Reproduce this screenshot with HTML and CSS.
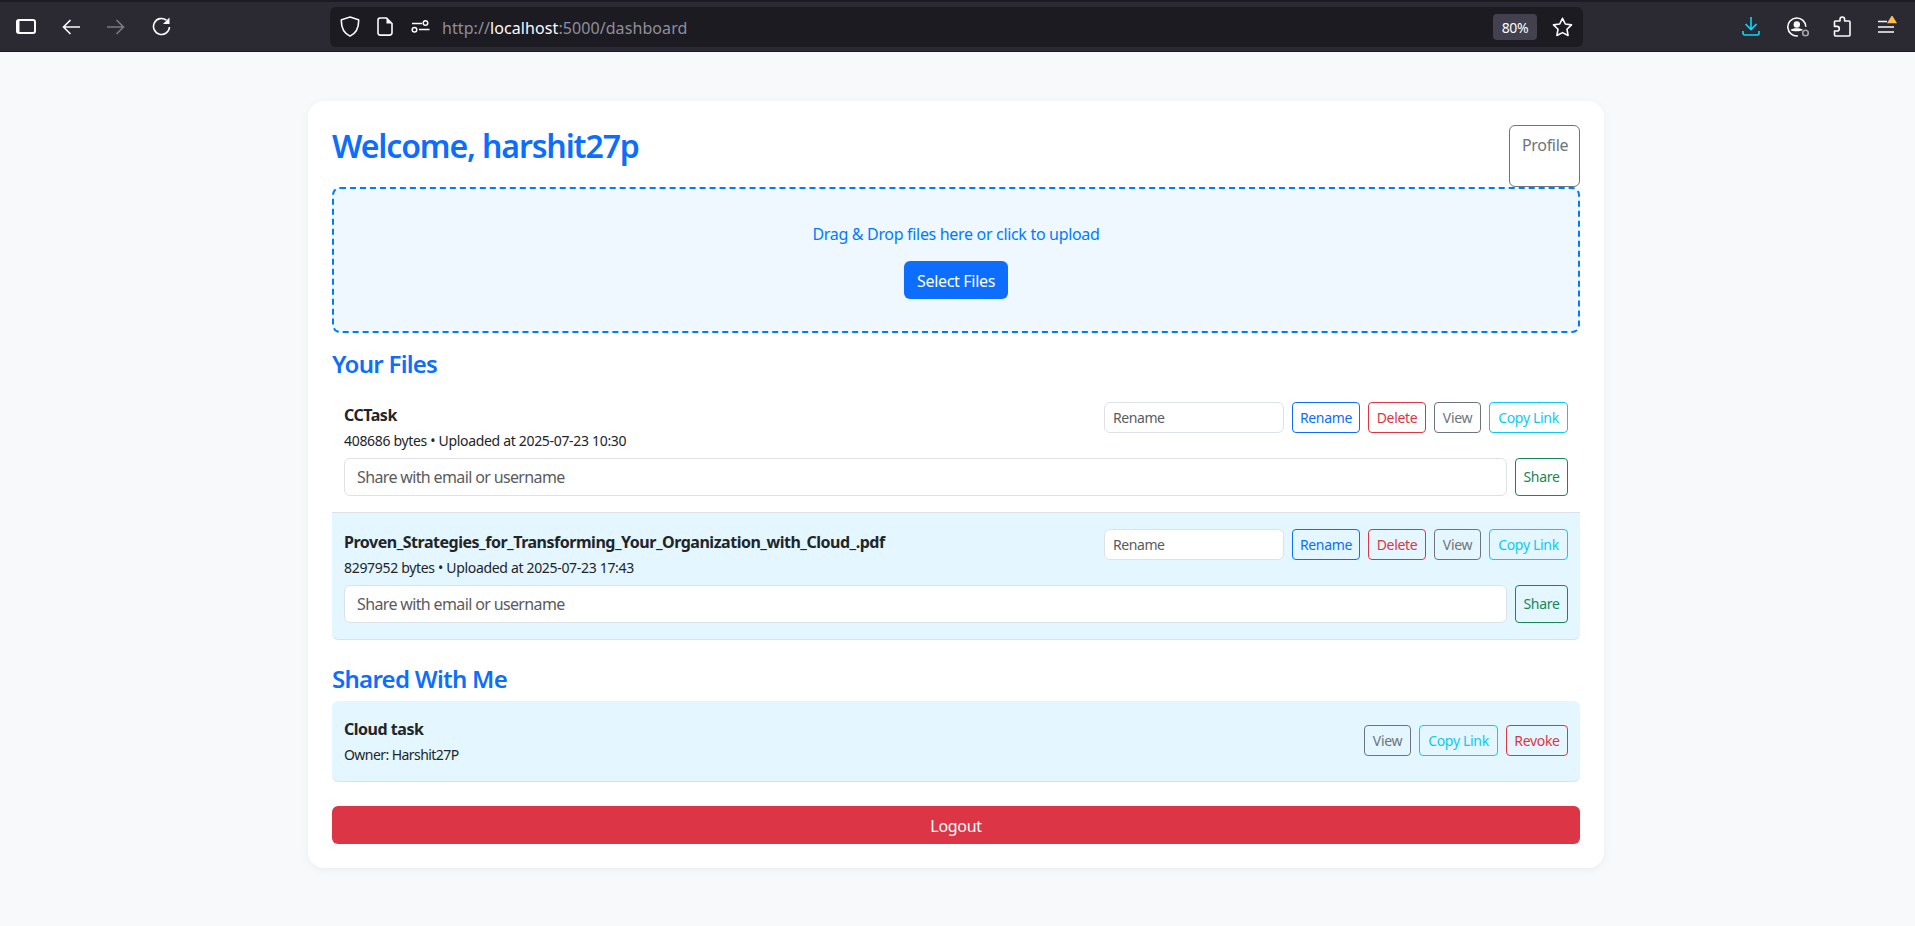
FILE: index.html
```html
<!DOCTYPE html>
<html lang="en">
<head>
    <meta charset="UTF-8">
    <title>Dashboard</title>
    <link rel="stylesheet" href="styles.css">
</head>
<body>

    <header class="toolbar">
        <svg class="icon icon-sidebar" width="20" height="15" viewBox="0 0 20 15" fill="none" stroke="#fbfbfe" stroke-width="2"><rect x="1" y="1" width="18" height="13" rx="2"/><path d="M2 1.500v12" stroke-width="3"/></svg>
        <svg class="icon icon-back" width="18" height="16" viewBox="0 0 18 16" fill="none" stroke="#fbfbfe" stroke-width="1.6"><path d="M18 8H1.500M8.500 1l-7 7 7 7"/></svg>
        <svg class="icon icon-forward" width="18" height="16" viewBox="0 0 18 16" fill="none" stroke="#7b7a82" stroke-width="1.6"><path d="M0 8h16.500M9.500 1l7 7-7 7"/></svg>
        <svg class="icon icon-reload" width="19" height="19" viewBox="0 0 19 19" fill="none" stroke="#fbfbfe" stroke-width="1.6"><path d="M14.500 3.200A8 8 0 1 0 17.500 10"/><path d="M11 7h6.500V.5z" fill="#fbfbfe" stroke="none"/></svg>

        <div class="urlbar">
            <svg class="icon icon-shield" width="20" height="21" viewBox="0 0 20 21" fill="none" stroke="#fbfbfe" stroke-width="1.6"><path d="M10 1 18.600 3.800c.4 8-1.700 13-8.600 16.300C3.100 16.800 1 11.800 1.400 3.800z"/></svg>
            <svg class="icon icon-page" width="16" height="19" viewBox="0 0 16 19" fill="none" stroke="#fbfbfe" stroke-width="1.6"><path d="M3 1h6.500L15 6.500v9.300a2.300 2.300 0 0 1-2.300 2.300H3.300A2.300 2.300 0 0 1 1 15.800V3.200A2.200 2.200 0 0 1 3 1z"/><path d="M9.500 1.500v5h5z" fill="#fbfbfe" stroke="none"/></svg>
            <svg class="icon icon-perm" width="19" height="13" viewBox="0 0 19 13" fill="none" stroke="#fbfbfe" stroke-width="1.5"><circle cx="14.500" cy="3" r="2.300"/><path d="M1 3.500h10"/><circle cx="3.500" cy="9.800" r="2.300"/><path d="M8 9.500h10.500"/></svg>
            <span class="url">http://<b>localhost</b>:5000/dashboard</span>
            <span class="zoom-chip">80%</span>
            <svg class="icon icon-star" width="21" height="20" viewBox="0 0 21 20" fill="none" stroke="#fbfbfe" stroke-width="1.6" stroke-linejoin="round"><path d="M10.500 1.300 13.300 7l6.200.9-4.500 4.400 1.100 6.200-5.600-2.900-5.600 2.900 1.100-6.200L1.500 7.900 7.700 7z"/></svg>
        </div>

        <svg class="icon icon-download" width="18" height="19" viewBox="0 0 18 19" fill="none" stroke="#00ddff" stroke-width="1.6"><path d="M9 0v12.500M3.500 7 9 12.500 14.500 7M1 14v2a2 2 0 0 0 2 2h12a2 2 0 0 0 2-2v-2"/></svg>
        <svg class="icon icon-account" width="24" height="20" viewBox="0 0 24 20" fill="none" stroke="#fbfbfe" stroke-width="1.6"><path d="M19.800 9.800a9 9 0 1 0-8 9.100"/><circle cx="10.800" cy="7.500" r="3.200" fill="#fbfbfe" stroke="none"/><path d="M4.500 13c2-2.500 11-2.500 12.500 0-2 1-9 2.500-12.500 0z" fill="#fbfbfe" stroke="none"/><circle cx="19.500" cy="16" r="2.800" stroke="#a5a4ab"/></svg>
        <svg class="icon icon-ext" width="18" height="21" viewBox="0 0 18 21" fill="none" stroke="#fbfbfe" stroke-width="1.6" stroke-linejoin="round"><path d="M7 5V3.300a2.300 2.300 0 0 1 4.600 0V5H16a1 1 0 0 1 1 1v13a1 1 0 0 1-1 1H2.500a1 1 0 0 1-1-1v-4H4a2.300 2.300 0 0 0 0-4.600H1.500V6a1 1 0 0 1 1-1H7z"/></svg>
        <svg class="icon icon-menu" width="20" height="20" viewBox="0 0 20 20" fill="none" stroke="#fbfbfe" stroke-width="1.6"><path d="M1 6.500h9M1 12h16M1 17h16"/><path d="M10 8.300 14.500 1h1l4.500 7.300z" fill="#ffbd4f" stroke="none"/></svg>
    </header>

    <main class="card">
        <div class="card-head">
            <h1>Welcome, harshit27p</h1>
            <a class="btn btn-profile">Profile</a>
        </div>

        <div class="dropzone">
            <p>Drag &amp; Drop files here or click to upload</p>
            <button class="btn btn-primary">Select Files</button>
        </div>

        <h2>Your Files</h2>
        <div class="file-list">
            <div class="file-row">
                <div class="row-top">
                    <div class="file-info">
                        <strong>CCTask</strong>
                        <small>408686 bytes • Uploaded at 2025-07-23 10:30</small>
                    </div>
                    <div class="file-actions">
                        <input class="input-sm" placeholder="Rename">
                        <button class="btn-sm out-blue w-rename">Rename</button>
                        <button class="btn-sm out-red w-delete">Delete</button>
                        <button class="btn-sm out-grey w-view">View</button>
                        <button class="btn-sm out-cyan w-copy">Copy Link</button>
                    </div>
                </div>
                <div class="share-row">
                    <input class="input-share" placeholder="Share with email or username">
                    <button class="btn-share">Share</button>
                </div>
            </div>
            <div class="file-row tinted">
                <div class="row-top">
                    <div class="file-info">
                        <strong>Proven_Strategies_for_Transforming_Your_Organization_with_Cloud_.pdf</strong>
                        <small>8297952 bytes • Uploaded at 2025-07-23 17:43</small>
                    </div>
                    <div class="file-actions">
                        <input class="input-sm" placeholder="Rename">
                        <button class="btn-sm out-blue w-rename">Rename</button>
                        <button class="btn-sm out-red w-delete">Delete</button>
                        <button class="btn-sm out-grey w-view">View</button>
                        <button class="btn-sm out-cyan w-copy">Copy Link</button>
                    </div>
                </div>
                <div class="share-row">
                    <input class="input-share" placeholder="Share with email or username">
                    <button class="btn-share">Share</button>
                </div>
            </div>
        </div>

        <h2>Shared With Me</h2>
        <div class="file-row tinted shared-row">
            <div class="row-top shared-top">
                <div class="file-info">
                    <strong>Cloud task</strong>
                    <small class="owner">Owner: Harshit27P</small>
                </div>
                <div class="file-actions">
                    <button class="btn-sm out-grey w-view">View</button>
                    <button class="btn-sm out-cyan w-copy">Copy Link</button>
                    <button class="btn-sm out-red w-revoke">Revoke</button>
                </div>
            </div>
        </div>

        <button class="btn btn-logout">Logout</button>
    </main>

</body>
</html>
```

FILE: styles.css
```css
* {
    box-sizing: border-box;
}
body {
    margin: 0;
    background-color: #f8f9fa;
    color: #212529;
    font-family: "Noto Sans", sans-serif;
    font-size: 16px;
    line-height: 24px;
    letter-spacing: -0.02em;
}

/* browser chrome */
.toolbar {
    display: flex;
    align-items: center;
    height: 52px;
    background-color: #2b2a33;
    border-top: 2px solid #1c1b22;
    border-bottom: 1px solid #1c1b22;
}
.icon {
    flex: none;
    display: block;
}
.icon-sidebar { margin-left: 16px; }
.icon-back { margin-left: 26px; }
.icon-forward { margin-left: 27px; }
.icon-reload { margin-left: 27px; }
.urlbar {
    display: flex;
    align-items: center;
    width: 1253px;
    height: 40px;
    margin-left: 159px;
    background-color: #1c1b22;
    border-radius: 6px;
}
.icon-shield { margin-left: 10px; }
.icon-page { margin-left: 17px; }
.icon-perm { margin-left: 18px; }
.url {
    flex: 1;
    margin-left: 12px;
    padding-top: 2px;
    color: #8f8f9d;
    font-size: 16px;
    letter-spacing: 0.005em;
}
.url b {
    color: #fbfbfe;
    font-weight: 400;
}
.zoom-chip {
    width: 44px;
    height: 26px;
    background-color: #42414d;
    border-radius: 4px;
    color: #fbfbfe;
    font-size: 14px;
    line-height: 27px;
    text-align: center;
}
.icon-star { margin-left: 15px; margin-right: 10px; }
.icon-download { margin-left: 159px; }
.icon-account { margin-left: 26px; }
.icon-ext { margin-left: 23px; }
.icon-menu { margin-left: 26px; margin-top: -3px; }

/* page */
.card {
    width: 1296px;
    margin: 49px 0 58px 308px;
    padding: 24px;
    background-color: white;
    border-radius: 16px;
    box-shadow: 0 2px 10px rgba(0, 0, 0, 0.05);
}
.card-head {
    display: flex;
    justify-content: space-between;
}
h1 {
    height: 38px;
    margin: 0 0 24px;
    padding-top: 2px;
    color: #0d6efd;
    font-size: 32px;
    font-weight: 600;
    line-height: 38px;
    letter-spacing: -0.035em;
}
h2 {
    height: 28.8px;
    margin: 0 0 8px;
    padding-top: 1px;
    color: #0d6efd;
    font-size: 24px;
    font-weight: 600;
    line-height: 28px;
    letter-spacing: -0.03em;
}
button, input {
    font-family: inherit;
    letter-spacing: inherit;
}
.btn {
    display: block;
    padding: 7px 12px 5px;
    border: 1px solid transparent;
    border-radius: 6px;
    font-size: 16px;
    line-height: 24px;
    text-align: center;
}
.btn-profile {
    width: 71px;
    border-color: #6c757d;
    color: #6c757d;
}
.btn-primary {
    margin: 0 auto;
    background-color: #0d6efd;
    color: white;
}
.btn-logout {
    width: 100%;
    margin-top: 24px;
    background-color: #dc3545;
    color: white;
}
.dropzone {
    height: 146px;
    margin-bottom: 16px;
    padding: 32px;
    background-color: #f0f8ff;
    border: 2px dashed #007bff;
    border-radius: 8px;
    text-align: center;
}
.dropzone p {
    height: 24px;
    margin: 0 0 16px;
    padding-top: 1px;
    color: #007bff;
}

/* file rows */
.file-list {
    margin-bottom: 24px;
}
.file-row {
    padding: 16px 12px;
    border-bottom: 1px solid #dee2e6;
}
.tinted {
    background-color: #e4f6ff;
    border-radius: 0 0 6px 6px;
}
.shared-row {
    border-radius: 6px;
}
.row-top {
    display: flex;
    justify-content: space-between;
    align-items: flex-start;
    height: 48px;
    margin-bottom: 8px;
}
.shared-top {
    align-items: center;
    margin-bottom: 0;
}
.file-info {
    display: flex;
    flex-direction: column;
    gap: 3px;
    padding-top: 1px;
}
.file-info strong {
    font-size: 16px;
    font-weight: 700;
    line-height: 24px;
    letter-spacing: -0.03em;
}
.file-info small {
    font-size: 14px;
    line-height: 21px;
}
.file-info .owner {
    letter-spacing: -0.04em;
}
.file-actions {
    display: flex;
    gap: 8px;
}
.input-sm {
    width: 180px;
    height: 31px;
    padding: 4px 8px;
    background-color: white;
    border: 1px solid #dee2e6;
    border-radius: 6px;
    font-size: 14px;
    letter-spacing: -0.03em;
}
input::placeholder {
    color: #595c5f;
    opacity: 1;
}
.btn-sm {
    height: 31px;
    padding: 0;
    background: none;
    border: 1px solid;
    border-radius: 4px;
    font-size: 14px;
    line-height: 21px;
}
.w-rename { width: 68px; }
.w-delete { width: 58px; }
.w-view { width: 47px; }
.w-copy { width: 79px; }
.w-revoke { width: 62px; }
.out-blue { color: #0d6efd; }
.out-red { color: #dc3545; }
.out-grey { color: #6c757d; }
.out-cyan { color: #0dcaf0; }
.share-row {
    display: flex;
    gap: 8px;
}
.input-share {
    flex: 1;
    height: 38px;
    padding: 6px 12px;
    background-color: white;
    border: 1px solid #dee2e6;
    border-radius: 6px;
    font-size: 16px;
    letter-spacing: -0.04em;
}
.btn-share {
    width: 53px;
    height: 38px;
    padding: 0;
    background: none;
    border: 1px solid #198754;
    border-radius: 4px;
    color: #198754;
    font-size: 14px;
}
```
